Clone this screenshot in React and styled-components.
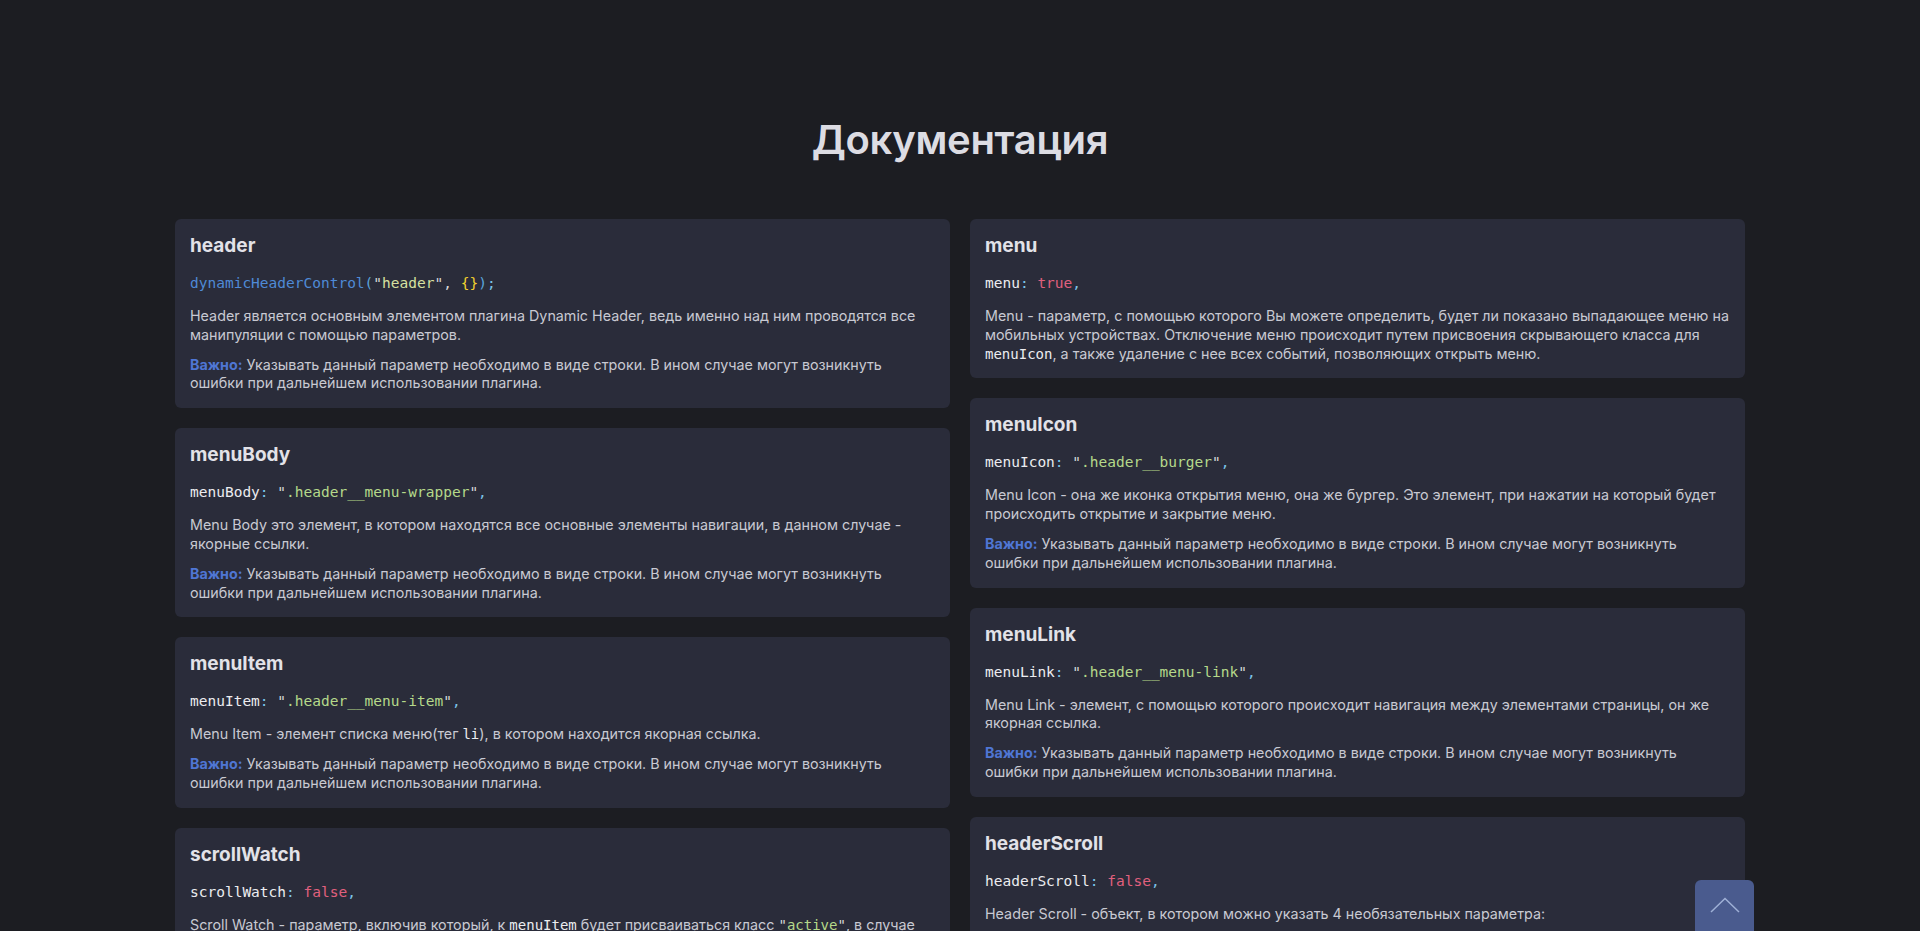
import React from "react";
import styled, { createGlobalStyle } from "styled-components";

const Global = createGlobalStyle`
  html { scrollbar-width: none; }
  html::-webkit-scrollbar { display: none; }
  body {
    margin: 0;
    background: #1c1d22;
    font-family: Inter, "Noto Sans", sans-serif;
    color: #c6c7d0;
  }
`;

const Page = styled.main`
  width: 1570px;
  margin: 0 auto;
  padding: 115px 0 40px;
`;

const Title = styled.h1`
  margin: 0 0 54px;
  text-align: center;
  font-size: 40px;
  line-height: 50px;
  font-weight: 600;
  color: #dcdce3;
  letter-spacing: -0.3px;
`;

const Columns = styled.div`
  display: grid;
  grid-template-columns: 1fr 1fr;
  gap: 20px;
  align-items: start;
`;

const Column = styled.div`
  display: flex;
  flex-direction: column;
  gap: 20px;
`;

const Card = styled.section`
  background: #2a2c3a;
  border-radius: 6px;
  padding: 15px 15px 15px;
`;

const CardTitle = styled.h2`
  margin: 0 0 15px;
  font-size: 19px;
  line-height: 24px;
  font-weight: 700;
  color: #e2e2e8;
`;

const CodeLine = styled.pre`
  margin: 0 0 14px;
  font-family: "DejaVu Sans Mono", "Liberation Mono", monospace;
  font-size: 14.5px;
  line-height: 20px;
  color: #ececf0;
`;

const Text = styled.p`
  margin: 0 0 11px;
  font-size: 14.3px;
  line-height: 18.8px;
  color: #c8c9d2;
  &:last-child { margin-bottom: 0; }
`;

const List = styled.ul`
  margin: 6px 0 0;
  padding-left: 22px;
  font-size: 14.3px;
  line-height: 19px;
`;

const Mono = styled.code`
  font-family: "DejaVu Sans Mono", "Liberation Mono", monospace;
  font-size: 14px;
  line-height: 1;
  color: ${(p) => p.$color || "#ececf0"};
`;

const Important = styled.strong`
  color: #4f76d4;
  font-weight: 700;
`;

const Tok = styled.span`
  color: ${(p) => p.$c};
`;

const C = {
  fn: "#4f8ad6",
  paren: "#5aa4dc",
  str: "#b5d98a",
  strYellow: "#d6e0a0",
  quote: "#d8d8d8",
  brace: "#f2d22e",
  punct: "#7cc4e8",
  key: "#ececf0",
  bool: "#e0607e",
};

const ScrollTop = styled.button`
  position: fixed;
  left: 1695px;
  top: 880px;
  width: 59px;
  height: 60px;
  border: none;
  border-radius: 6px;
  background: #4a5b8e;
  display: flex;
  align-items: flex-start;
  justify-content: center;
  padding-top: 17px;
  cursor: pointer;
`;

const Warn = () => (
  <Text>
    <Important>Важно:</Important> Указывать данный параметр необходимо в виде строки. В ином случае могут возникнуть
    ошибки при дальнейшем использовании плагина.
  </Text>
);

const StrVal = ({ v }) => (
  <>
    <Tok $c={C.quote}>"</Tok>
    <Tok $c={C.str}>{v}</Tok>
    <Tok $c={C.quote}>"</Tok>
  </>
);

const KeyLine = ({ k, children }) => (
  <CodeLine>
    <Tok $c={C.key}>{k}</Tok>
    <Tok $c={C.punct}>: </Tok>
    {children}
    <Tok $c={C.punct}>,</Tok>
  </CodeLine>
);

export default function App() {
  return (
    <>
      <Global />
      <Page>
        <Title>Документация</Title>
        <Columns>
          <Column>
            <Card>
              <CardTitle>header</CardTitle>
              <CodeLine>
                <Tok $c={C.fn}>dynamicHeaderControl</Tok>
                <Tok $c={C.paren}>(</Tok>
                <Tok $c={C.quote}>"</Tok>
                <Tok $c={C.strYellow}>header</Tok>
                <Tok $c={C.quote}>"</Tok>
                <Tok $c={C.quote}>, </Tok>
                <Tok $c={C.brace}>{"{}"}</Tok>
                <Tok $c={C.paren}>)</Tok>
                <Tok $c={C.punct}>;</Tok>
              </CodeLine>
              <Text>
                Header является основным элементом плагина Dynamic Header, ведь именно над ним проводятся все
                манипуляции с помощью параметров.
              </Text>
              <Warn />
            </Card>
            <Card>
              <CardTitle>menuBody</CardTitle>
              <KeyLine k="menuBody">
                <StrVal v=".header__menu-wrapper" />
              </KeyLine>
              <Text>
                Menu Body это элемент, в котором находятся все основные элементы навигации, в данном случае -
                якорные ссылки.
              </Text>
              <Warn />
            </Card>
            <Card>
              <CardTitle>menuItem</CardTitle>
              <KeyLine k="menuItem">
                <StrVal v=".header__menu-item" />
              </KeyLine>
              <Text>
                Menu Item - элемент списка меню(тег <Mono>li</Mono>), в котором находится якорная ссылка.
              </Text>
              <Warn />
            </Card>
            <Card>
              <CardTitle>scrollWatch</CardTitle>
              <KeyLine k="scrollWatch">
                <Tok $c={C.bool}>false</Tok>
              </KeyLine>
              <Text>
                Scroll Watch - параметр, включив который, к <Mono>menuItem</Mono> будет присваиваться класс{" "}
                <Mono $color={C.quote}>"</Mono>
                <Mono $color={C.str}>active</Mono>
                <Mono $color={C.quote}>"</Mono>, в случае если пользователь находится в пределах секции, на
                которую ссылается данный пункт меню.
              </Text>
            </Card>
          </Column>
          <Column>
            <Card>
              <CardTitle>menu</CardTitle>
              <KeyLine k="menu">
                <Tok $c={C.bool}>true</Tok>
              </KeyLine>
              <Text>
                Menu - параметр, с помощью которого Вы можете определить, будет ли показано выпадающее меню на
                мобильных устройствах. Отключение меню происходит путем присвоения скрывающего класса для{" "}
                <Mono>menuIcon</Mono>, а также удаление с нее всех событий, позволяющих открыть меню.
              </Text>
            </Card>
            <Card>
              <CardTitle>menuIcon</CardTitle>
              <KeyLine k="menuIcon">
                <StrVal v=".header__burger" />
              </KeyLine>
              <Text>
                Menu Icon - она же иконка открытия меню, она же бургер. Это элемент, при нажатии на который будет
                происходить открытие и закрытие меню.
              </Text>
              <Warn />
            </Card>
            <Card>
              <CardTitle>menuLink</CardTitle>
              <KeyLine k="menuLink">
                <StrVal v=".header__menu-link" />
              </KeyLine>
              <Text>
                Menu Link - элемент, с помощью которого происходит навигация между элементами страницы, он же
                якорная ссылка.
              </Text>
              <Warn />
            </Card>
            <Card>
              <CardTitle>headerScroll</CardTitle>
              <KeyLine k="headerScroll">
                <Tok $c={C.bool}>false</Tok>
              </KeyLine>
              <Text>Header Scroll - объект, в котором можно указать 4 необязательных параметра:</Text>
              <List>
                <li><Mono>hideHeader</Mono></li>
                <li><Mono>hideHeaderOffset</Mono></li>
                <li><Mono>fixedHeader</Mono></li>
                <li><Mono>fixedHeaderOffset</Mono></li>
              </List>
            </Card>
          </Column>
        </Columns>
      </Page>
      <ScrollTop aria-label="Наверх">
        <svg width="30" height="16" viewBox="0 0 30 16" fill="none">
          <path d="M1 15 L15 1.5 L29 15" stroke="#9fb0d6" strokeWidth="1.5" />
        </svg>
      </ScrollTop>
    </>
  );
}
